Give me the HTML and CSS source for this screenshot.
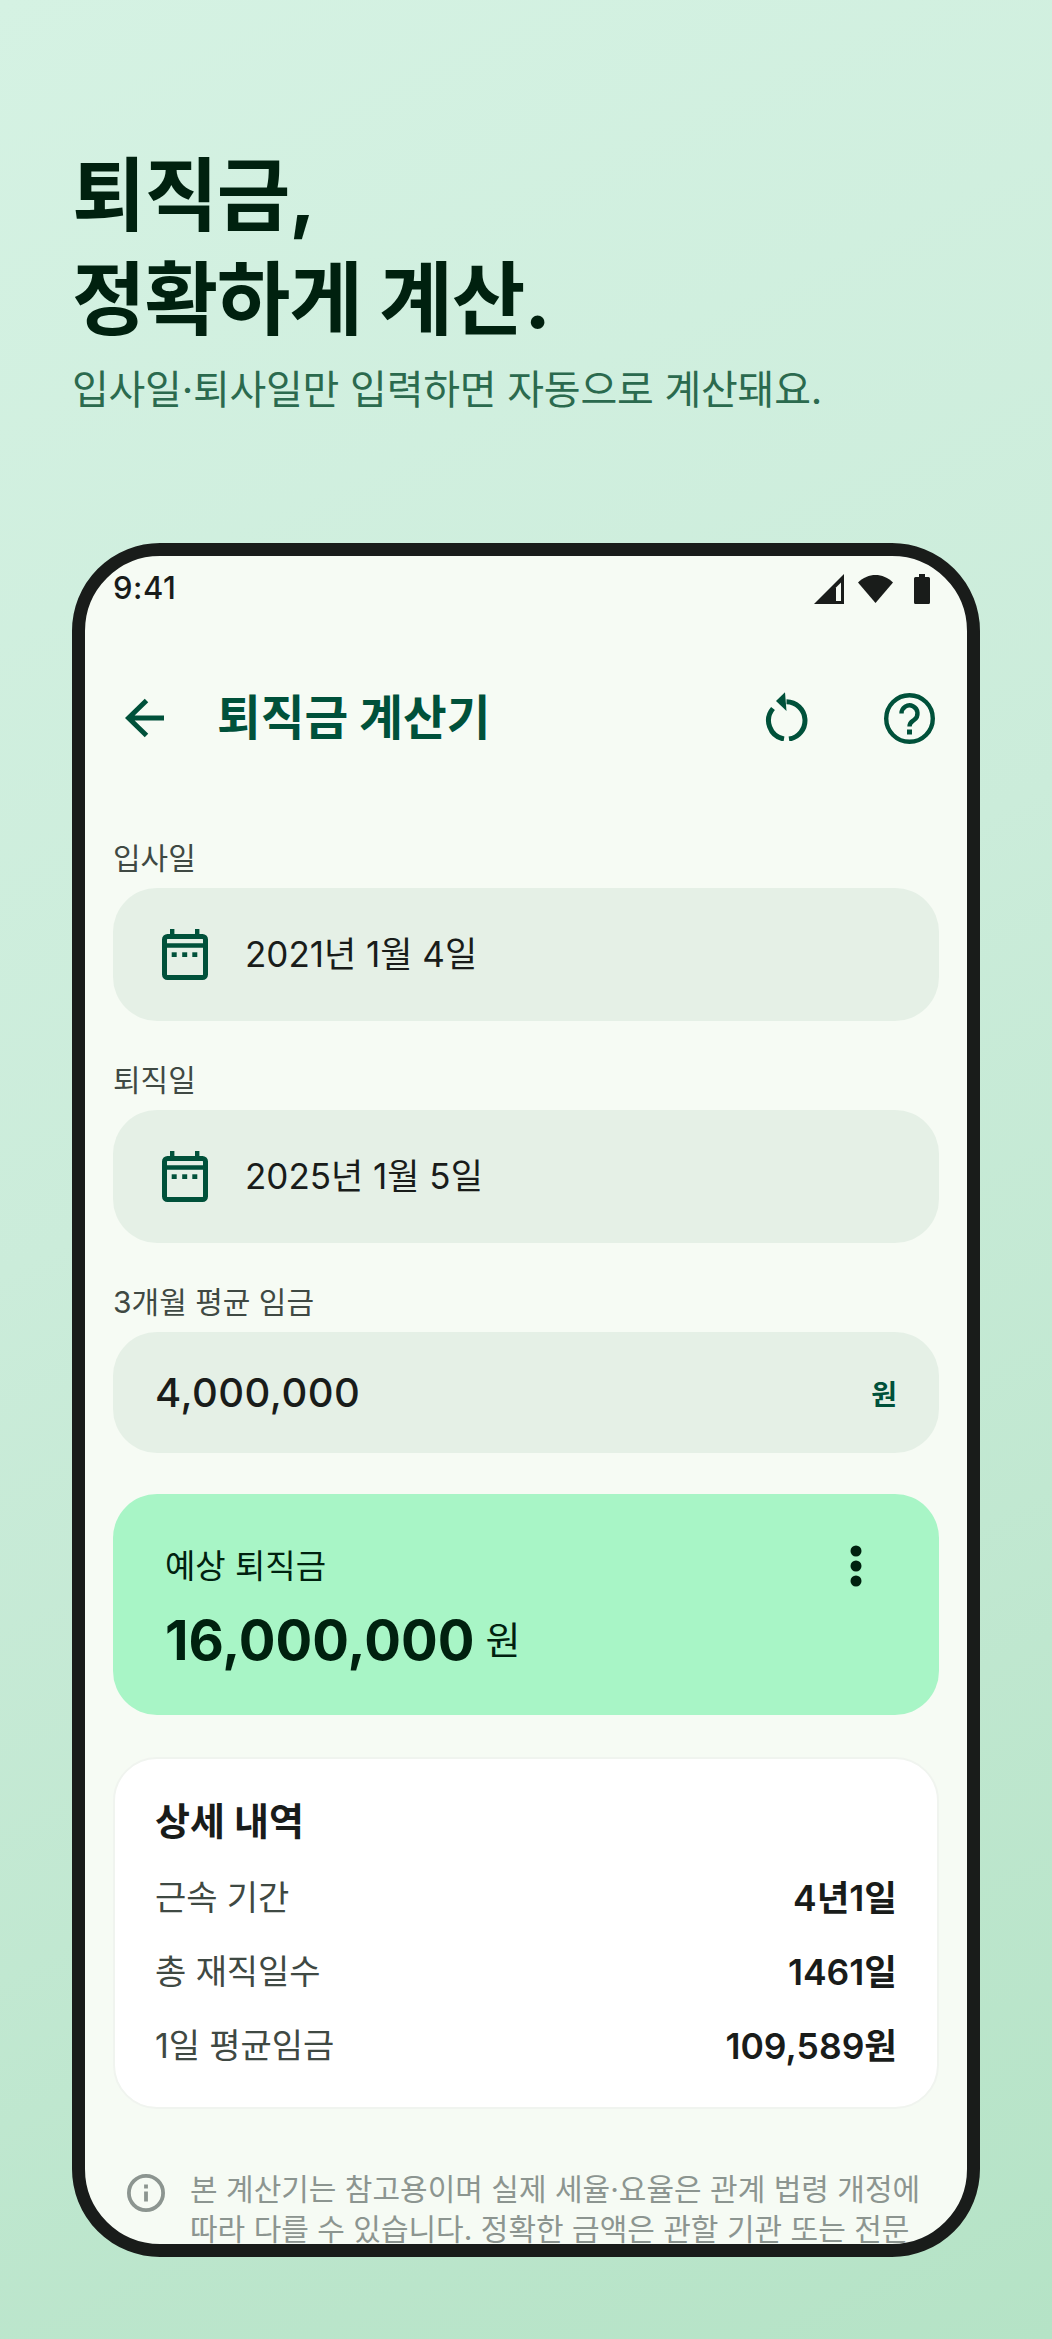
FILE: index.html
```html
<!DOCTYPE html>
<html lang="ko">
<head>
<meta charset="utf-8">
<title>퇴직금 계산기</title>
<link rel="stylesheet" href="styles.css">
</head>
<body>
<header class="hero">
  <h1>퇴직금,<br>정확하게 계산.</h1>
  <p>입사일·퇴사일만 입력하면 자동으로 계산돼요.</p>
</header>
<div class="phone">
  <div class="screen">
    <div class="status">
      <span class="time">9:41</span>
      <div class="status-icons">
        <svg class="i-signal" viewBox="0 0 30 30"><path d="M30 0V30H0Z" fill="#191c1a"/><path d="M22 13.500V27H27V8.500Z" fill="#f6fbf4"/></svg>
        <svg class="i-wifi" viewBox="0 0 35 28"><path d="M17.500 28L0 7.500C10 -2.500 25 -2.500 35 7.500Z" fill="#191c1a"/></svg>
        <svg class="i-battery" viewBox="0 0 16 30"><path d="M5 0H11V3H14.500A1.500 1.500 0 0 1 16 4.500V28.500A1.500 1.500 0 0 1 14.500 30H1.500A1.500 1.500 0 0 1 0 28.500V4.500A1.500 1.500 0 0 1 1.500 3H5Z" fill="#191c1a"/></svg>
      </div>
    </div>
    <div class="appbar">
      <svg class="i-back" viewBox="0 0 41 40"><path d="M39 20H5M21.500 2.500L3.500 20L21.500 37.500" fill="none" stroke="#00513a" stroke-width="5"/></svg>
      <div class="title">퇴직금 계산기</div>
      <svg class="i-reset" viewBox="0 0 43 49"><path d="M21.500 9.800A18.700 18.700 0 0 1 24 47M19 47A18.700 18.700 0 0 1 8 16.500" fill="none" stroke="#00513a" stroke-width="5"/><path d="M11 9L20 0.300L21.500 19Z" fill="#00513a"/></svg>
      <svg class="i-help" viewBox="0 0 51 51"><circle cx="25.500" cy="25.500" r="23.300" fill="none" stroke="#00513a" stroke-width="4.400"/><path d="M17.500 20.500A8 8 0 1 1 30.300 26.800C27.500 29 25.500 29.500 25.500 33.500" fill="none" stroke="#00513a" stroke-width="4.400"/><rect x="23" y="36.500" width="5" height="5" fill="#00513a"/></svg>
    </div>
    <main class="content">
      <label class="label">입사일</label>
      <div class="field field-date">
        <svg class="i-cal" viewBox="0 0 46 51"><rect x="2.500" y="7.500" width="41" height="41" rx="3" fill="none" stroke="#00513a" stroke-width="5"/><path d="M2 16.500H44" stroke="#00513a" stroke-width="4.400"/><rect x="8" y="0" width="4.400" height="7" fill="#00513a"/><rect x="33" y="0" width="4.400" height="7" fill="#00513a"/><rect x="9.700" y="23.300" width="5" height="4.700" fill="#00513a"/><rect x="20.200" y="23.300" width="5" height="4.700" fill="#00513a"/><rect x="30.300" y="23.300" width="5" height="4.700" fill="#00513a"/></svg>
        <span class="date">2021년 1월 4일</span>
      </div>
      <label class="label gap">퇴직일</label>
      <div class="field field-date">
        <svg class="i-cal" viewBox="0 0 46 51"><rect x="2.500" y="7.500" width="41" height="41" rx="3" fill="none" stroke="#00513a" stroke-width="5"/><path d="M2 16.500H44" stroke="#00513a" stroke-width="4.400"/><rect x="8" y="0" width="4.400" height="7" fill="#00513a"/><rect x="33" y="0" width="4.400" height="7" fill="#00513a"/><rect x="9.700" y="23.300" width="5" height="4.700" fill="#00513a"/><rect x="20.200" y="23.300" width="5" height="4.700" fill="#00513a"/><rect x="30.300" y="23.300" width="5" height="4.700" fill="#00513a"/></svg>
        <span class="date">2025년 1월 5일</span>
      </div>
      <label class="label gap">3개월 평균 임금</label>
      <div class="field field-money">
        <span class="money">4,000,000</span>
        <span class="won">원</span>
      </div>
      <section class="result">
        <div class="result-text">
          <div class="result-label">예상 퇴직금</div>
          <div class="result-value"><span class="amount">16,000,000</span><span class="unit">원</span></div>
        </div>
        <svg class="i-more" viewBox="0 0 12 42"><circle cx="6" cy="6" r="5.500" fill="#00210f"/><circle cx="6" cy="21" r="5.500" fill="#00210f"/><circle cx="6" cy="36" r="5.500" fill="#00210f"/></svg>
      </section>
      <section class="detail">
        <h2>상세 내역</h2>
        <div class="row"><span class="key">근속 기간</span><span class="val">4년1일</span></div>
        <div class="row"><span class="key">총 재직일수</span><span class="val">1461일</span></div>
        <div class="row"><span class="key">1일 평균임금</span><span class="val">109,589원</span></div>
      </section>
      <div class="note">
        <svg class="i-info" viewBox="0 0 38 38"><circle cx="19" cy="19" r="17.100" fill="none" stroke="#8c9590" stroke-width="3.800"/><rect x="17.100" y="17.500" width="3.800" height="10" fill="#8c9590"/><rect x="17.100" y="10.500" width="3.800" height="4" fill="#8c9590"/></svg>
        <p>본 계산기는 참고용이며 실제 세율·요율은 관계 법령 개정에<br>따라 다를 수 있습니다. 정확한 금액은 관할 기관 또는 전문</p>
      </div>
    </main>
  </div>
</div>
</body>
</html>
```
FILE: styles.css
```css
* { box-sizing: border-box; }
html, body { margin: 0; padding: 0; }
body {
  width: 1052px;
  height: 2339px;
  overflow: hidden;
  background: linear-gradient(155deg, #d5f2e3 0%, #cbecda 45%, #b5e3c6 100%);
  font-family: Inter, "Noto Sans CJK KR", sans-serif;
}
.hero { padding: 143px 72px 0; }
.hero h1 {
  margin: 0;
  font-size: 80px;
  line-height: 104px;
  font-weight: 700;
  letter-spacing: -1.200px;
  color: #00210f;
}
.hero p {
  margin: 11px 0 0;
  font-size: 40px;
  line-height: 56px;
  font-weight: 400;
  letter-spacing: -0.250px;
  color: #2b6a4e;
}
.phone {
  margin: 125px 0 0 72px;
  width: 908px;
  height: 1714px;
  border: 13px solid #191c1a;
  border-radius: 88px;
  background: #f6fbf4;
  overflow: hidden;
}
.screen { height: 100%; border-radius: 75px; overflow: hidden; }
.status {
  height: 79px;
  padding: 12px 37px 0 28px;
  display: flex;
  justify-content: space-between;
  align-items: flex-start;
}
.time { font-size: 31px; line-height: 40px; font-weight: 500; letter-spacing: 0.500px; color: #191c1a; }
.status-icons { display: flex; align-items: flex-start; padding-top: 6px; }
.i-signal { width: 30px; height: 30px; }
.i-wifi { width: 35px; height: 28px; margin-left: 14px; margin-top: 1px; }
.i-battery { width: 16px; height: 30px; margin-left: 21px; }
.appbar {
  height: 166px;
  padding: 0 32px 0 40px;
  display: flex;
  align-items: center;
}
.i-back { width: 41px; height: 40px; flex: none; }
.title {
  flex: 1;
  margin-left: 51px;
  font-size: 47.500px;
  font-weight: 700;
  line-height: 60px;
  color: #00513a;
}
.i-reset { width: 43px; height: 49px; flex: none; margin: -3px 76px 0 0; }
.i-help { width: 51px; height: 51px; flex: none; }
.content { padding: 38px 28px 0; }
.label {
  display: block;
  height: 40px;
  margin-bottom: 9px;
  font-size: 30px;
  line-height: 38px;
  font-weight: 400;
  color: #3f4943;
}
.label.gap { margin-top: 40px; }
.field {
  display: flex;
  align-items: center;
  background: #e5f0e6;
  border-radius: 44px;
}
.field-date { height: 133px; padding-left: 49px; }
.i-cal { width: 46px; height: 51px; flex: none; }
.date { margin-left: 37px; font-size: 35px; line-height: 50px; margin-top: -1px; color: #191c1a; }
.field-money { height: 121px; padding: 0 42px; justify-content: space-between; }
.money { font-size: 40px; font-weight: 500; color: #191c1a; letter-spacing: 0.500px; }
.won { font-size: 28px; font-weight: 700; color: #00513a; }
.result {
  margin-top: 41px;
  height: 221px;
  background: #a8f5c6;
  border-radius: 44px;
  padding: 47px 77px 0 52px;
  display: flex;
  justify-content: space-between;
  align-items: flex-start;
}
.result-label { font-size: 33px; line-height: 50px; color: #00210f; }
.result-value { display: flex; align-items: center; margin-top: 14px; }
.amount { font-size: 54.500px; line-height: 70px; font-weight: 700; color: #00210f; }
.unit { margin-left: 11px; font-size: 38px; line-height: 50px; color: #00210f; }
.i-more { width: 12px; height: 42px; margin-top: 4px; }
.detail {
  margin-top: 42px;
  height: 352px;
  background: #ffffff;
  border: 2px solid #f0f4ef;
  border-radius: 44px;
  padding: 35px 40px 0;
}
.detail h2 { margin: 0 0 10px; font-size: 38px; line-height: 54px; font-weight: 700; color: #191c1a; }
.row { display: flex; justify-content: space-between; align-items: center; height: 74px; }
.key { font-size: 34px; letter-spacing: -0.100px; color: #3f4943; }
.val { font-size: 35.500px; font-weight: 600; color: #191c1a; }
.note { margin-top: 60px; padding-left: 14px; display: flex; align-items: flex-start; }
.i-info { width: 38px; height: 38px; margin-top: 5px; flex: none; }
.note p { margin: 0 0 0 25px; font-size: 30px; line-height: 40px; color: #8c9590; white-space: nowrap; }
```
